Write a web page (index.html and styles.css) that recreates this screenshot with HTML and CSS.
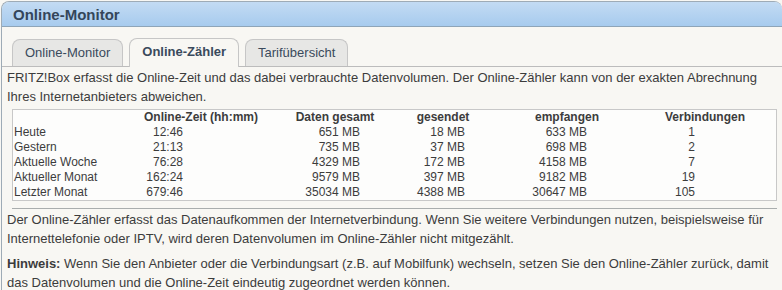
FILE: index.html
```html
<!DOCTYPE html>
<html lang="de">
  <head>
    <meta charset="utf-8">
    <title>Online-Monitor</title>
    <link rel="stylesheet" href="styles.css">
  </head>
  <body>
  <div class="page">
      <div class="page-head">
          <h1>Online-Monitor</h1>
      </div>
      <div class="page-body">
          <ul class="tabs">
              <li class="tab">Online-Monitor</li>
              <li class="tab active">Online-Zähler</li>
              <li class="tab">Tarifübersicht</li>
          </ul>

          <p>FRITZ!Box erfasst die Online-Zeit und das dabei verbrauchte Datenvolumen. Der Online-Zähler kann von der exakten Abrechnung Ihres Internetanbieters abweichen.</p>

          <div class="counter-box">
              <table class="counter">
                  <colgroup>
                      <col class="c-label">
                      <col class="c-time">
                      <col class="c-total">
                      <col class="c-sent">
                      <col class="c-recv">
                      <col class="c-conn">
                  </colgroup>
                  <thead>
                      <tr>
                          <th></th>
                          <th>Online-Zeit (hh:mm)</th>
                          <th>Daten gesamt</th>
                          <th>gesendet</th>
                          <th>empfangen</th>
                          <th>Verbindungen</th>
                      </tr>
                  </thead>
                  <tbody>
                      <tr><td>Heute</td><td>12:46</td><td>651 MB</td><td>18 MB</td><td>633 MB</td><td>1</td></tr>
                      <tr><td>Gestern</td><td>21:13</td><td>735 MB</td><td>37 MB</td><td>698 MB</td><td>2</td></tr>
                      <tr><td>Aktuelle Woche</td><td>76:28</td><td>4329 MB</td><td>172 MB</td><td>4158 MB</td><td>7</td></tr>
                      <tr><td>Aktueller Monat</td><td>162:24</td><td>9579 MB</td><td>397 MB</td><td>9182 MB</td><td>19</td></tr>
                      <tr><td>Letzter Monat</td><td>679:46</td><td>35034 MB</td><td>4388 MB</td><td>30647 MB</td><td>105</td></tr>
                  </tbody>
              </table>
          </div>

          <hr class="sep">

          <p>Der Online-Zähler erfasst das Datenaufkommen der Internetverbindung. Wenn Sie weitere Verbindungen nutzen, beispielsweise für Internettelefonie oder IPTV, wird deren Datenvolumen im Online-Zähler nicht mitgezählt.</p>
          <p class="note"><b>Hinweis:</b> Wenn Sie den Anbieter oder die Verbindungsart (z.B. auf Mobilfunk) wechseln, setzen Sie den Online-Zähler zurück, damit das Datenvolumen und die Online-Zeit eindeutig zugeordnet werden können.</p>
      </div>
  </div>
  </body>
</html>
```

FILE: styles.css
```css
/* Grundlayout */
body {
    margin: 1px 0 0 1px;
    font-family: "Liberation Sans", Arial, sans-serif;
    font-size: 13px;
    color: #3c3c3c;
    background-color: #f8f7f3;
    overflow: hidden;
}

/* Rahmen um die ganze Seite */
.page {
    width: 780px;
    border: 1px solid #9eabb6;
    border-right: none;
    border-bottom: none;
    border-radius: 8px 8px 0 0;
    background-color: #f8f7f3;
}

/* Blaue Titelleiste */
.page-head {
    height: 24px;
    padding-left: 11px;
    background: linear-gradient(#c3dbf3, #a7cbee);
    border-bottom: 1px solid #8ea5b8;
    border-radius: 7px 7px 0 0;
}

h1 {
    margin: 0;
    font-size: 15px;
    line-height: 25px;
    color: #34465a;
}

/* Reiter */
.tabs {
    display: flex;
    gap: 6px;
    list-style: none;
    margin: 11px 0 0 0;
    padding: 0 0 0 10px;
    height: 28px;
    align-items: flex-end;
    border-bottom: 1px solid #bcbcbc;
}

.tab {
    height: 26px;
    line-height: 26px;
    padding: 0 12px;
    color: #3a4a5c;
    background-color: #e7e7e5;
    border: 1px solid #c6c6c6;
    border-bottom: none;
    border-radius: 8px 8px 0 0;
}

.tab.active {
    height: 28px;
    margin-bottom: -1px;
    font-weight: bold;
    background-color: #f8f7f3;
}

/* Absätze */
p {
    margin: 1px 3px 0 5px;
    line-height: 19px;
}

.note {
    margin-top: 6px;
}

/* Tabelle Online-Zähler */
.counter-box {
    margin: 3px 5px 0 10px;
    border: 1px solid #c8c8c8;
    background-color: #fdfdfc;
}

.counter {
    table-layout: fixed;
    border-collapse: collapse;
    font-size: 12px;
}

.counter th,
.counter td {
    padding: 0;
    line-height: 15px;
    white-space: nowrap;
}

.counter th {
    text-align: center;
    font-weight: bold;
}

.counter td {
    text-align: right;
}

.counter td:first-child {
    text-align: left;
    padding-left: 1px;
}

.c-label { width: 127px; }
.c-time  { width: 122px; }
.c-total { width: 146px; }
.c-sent  { width: 70px; }
.c-recv  { width: 178px; }
.c-conn  { width: 98px; }

.counter td:nth-child(2) { padding-right: 79px; }
.counter td:nth-child(3) { padding-right: 48px; }
.counter td:nth-child(4) { padding-right: 13px; }
.counter td:nth-child(5) { padding-right: 69px; }
.counter td:nth-child(6) { padding-right: 59px; }

/* Trennlinie */
.sep {
    margin: 7px 5px 0 10px;
    border: none;
    border-top: 1px solid #a9adad;
    height: 0;
}
```
